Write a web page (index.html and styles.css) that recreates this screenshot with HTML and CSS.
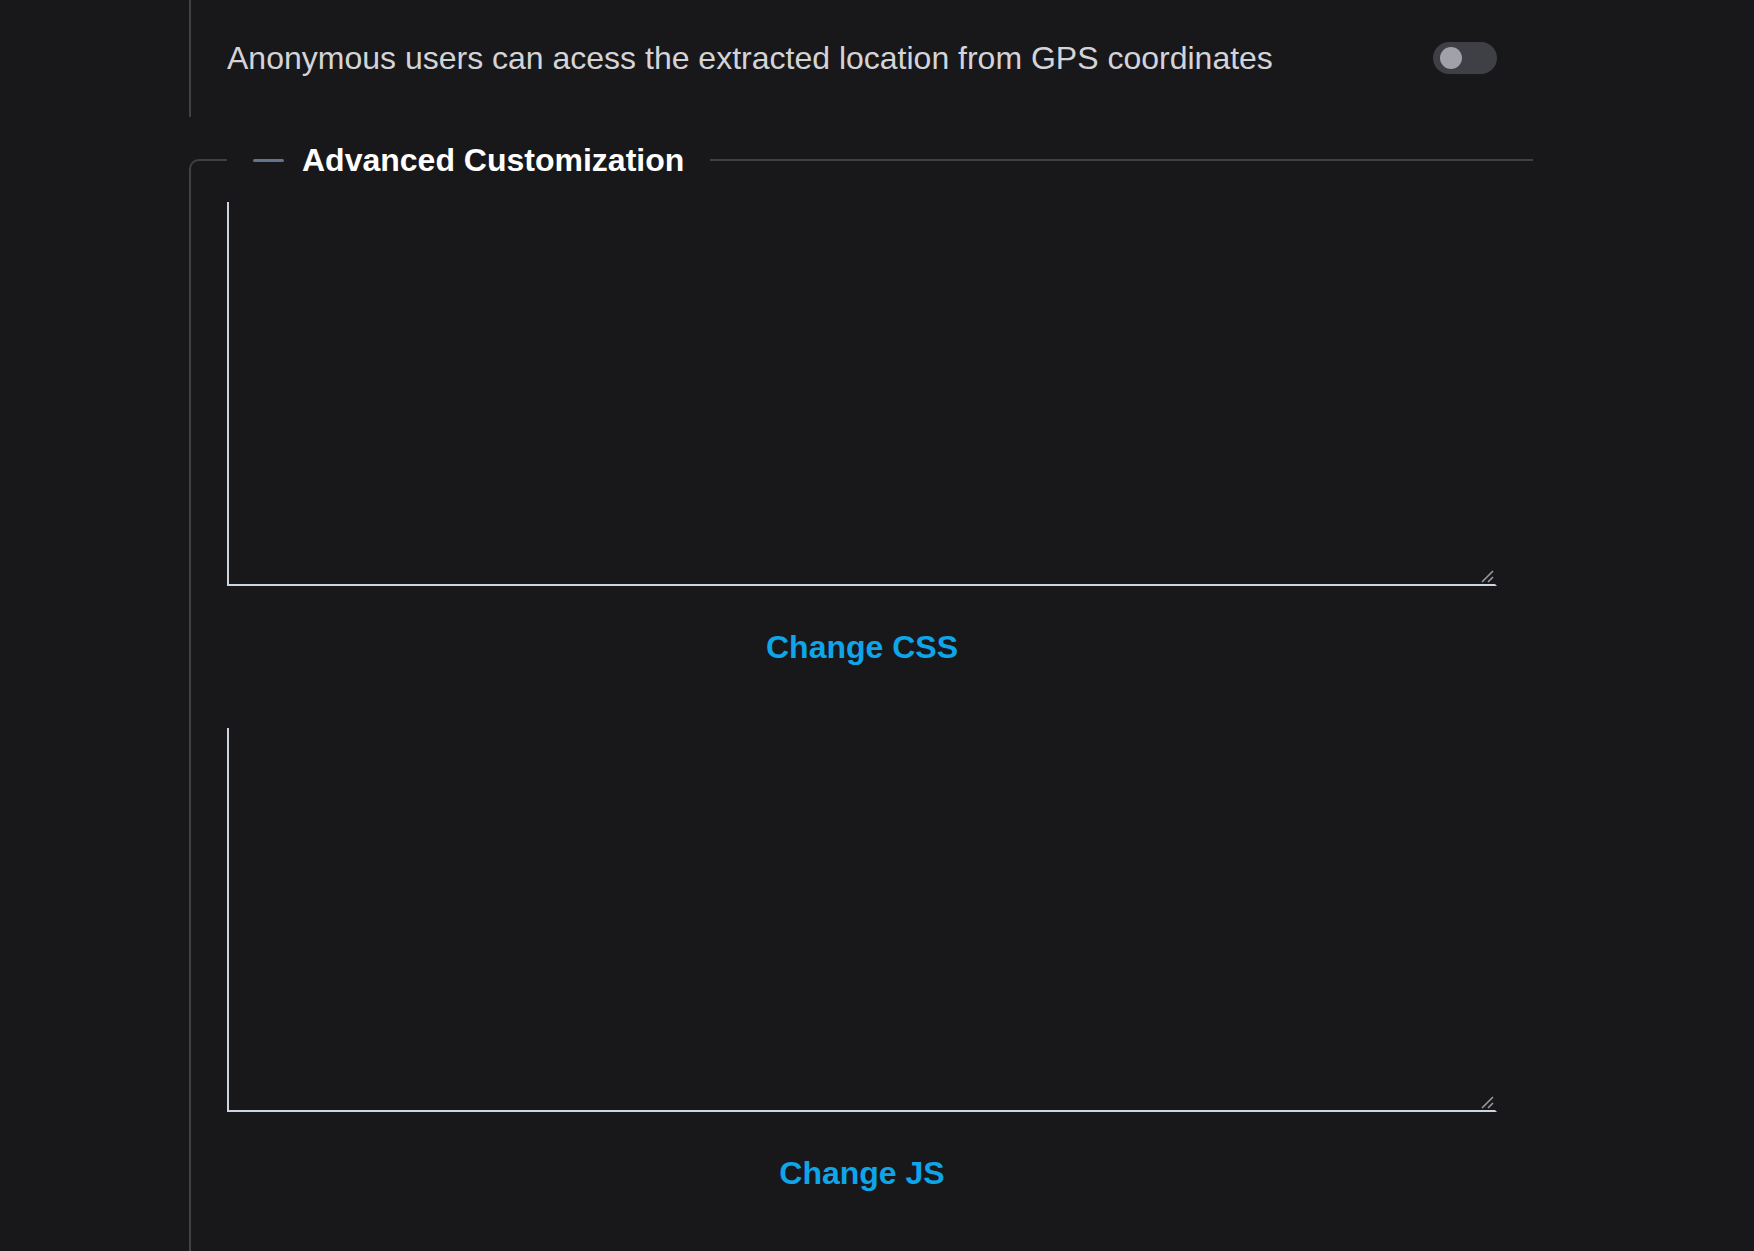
FILE: index.html
```html
<!DOCTYPE html>
<html lang="en">
<head>
<meta charset="utf-8">
<title>Settings</title>
<link rel="stylesheet" href="styles.css">
</head>
<body>
<div class="page">
  <div class="section-top">
    <span class="setting-label">Anonymous users can acess the extracted location from GPS coordinates</span>
    <span class="toggle"><span class="knob"></span></span>
  </div>
  <fieldset class="advanced">
    <legend class="advanced-legend"><span class="dash"></span><span class="legend-text">Advanced Customization</span></legend>
    <div class="editor">
      <textarea class="code-box"></textarea>
      <svg class="grip" width="16" height="16" viewBox="0 0 16 16" aria-hidden="true"><path d="M1 12 L12 1 M7 12 L12 7" stroke="#9a9a9a" stroke-width="1.6" fill="none"/></svg>
    </div>
    <div class="action"><a class="action-link" href="#">Change CSS</a></div>
    <div class="editor editor-2">
      <textarea class="code-box"></textarea>
      <svg class="grip" width="16" height="16" viewBox="0 0 16 16" aria-hidden="true"><path d="M1 12 L12 1 M7 12 L12 7" stroke="#9a9a9a" stroke-width="1.6" fill="none"/></svg>
    </div>
    <div class="action"><a class="action-link" href="#">Change JS</a></div>
  </fieldset>
</div>
</body>
</html>
```
FILE: styles.css
```css
html, body {
  margin: 0;
  padding: 0;
  background: #18181b;
  height: 100%;
  overflow: hidden;
}
body {
  font-family: "Liberation Sans", Arial, sans-serif;
  color: #d4d4d8;
}
.page {
  margin-left: 189px;
  width: 1344px;
}
.section-top {
  height: 117px;
  border-left: 2px solid #3f3f46;
  padding: 0 36px;
  display: flex;
  align-items: center;
  justify-content: space-between;
  box-sizing: border-box;
}
.setting-label {
  font-size: 32px;
  color: #d4d4d8;
}
.toggle {
  width: 64px;
  height: 32px;
  border-radius: 16px;
  background: #3f3f46;
  display: flex;
  align-items: center;
  padding-left: 7px;
  box-sizing: border-box;
  margin-top: -1px;
}
.knob {
  width: 22px;
  height: 22px;
  border-radius: 50%;
  background: #a1a1aa;
}
.advanced {
  margin: 23px 0 0 0;
  padding: 22px 36px 0 36px;
  border: none;
  border-top: 2px solid #3f3f46;
  border-left: 2px solid #3f3f46;
  border-top-left-radius: 10px;
  min-width: 0;
  box-sizing: border-box;
  width: 1344px;
  height: 1200px;
}
.advanced-legend {
  padding: 0 26px;
  margin: 0;
  height: 40px;
  display: flex;
  align-items: center;
  gap: 18px;
}
.dash {
  width: 31px;
  height: 3px;
  border-radius: 2px;
  background: #64748b;
}
.legend-text {
  font-size: 32px;
  font-weight: bold;
  color: #ffffff;
  line-height: 40px;
}
.editor {
  position: relative;
  width: 1270px;
  height: 384px;
}
.editor-2 {
  margin-top: 61px;
}
.code-box {
  display: block;
  width: 100%;
  height: 100%;
  box-sizing: border-box;
  margin: 0;
  background: transparent;
  border: 2px solid transparent;
  border-top: none;
  border-left-color: #cbd5e1;
  border-bottom-color: #cbd5e1;
  color: #d4d4d8;
  outline: none;
  resize: none;
}
.grip {
  position: absolute;
  right: 0;
  bottom: 0;
}
.action {
  padding-top: 41px;
  height: 40px;
  line-height: 40px;
  text-align: center;
  width: 1270px;
}
.action-link {
  font-size: 32px;
  font-weight: bold;
  color: #0ea5e9;
  text-decoration: none;
}
```
